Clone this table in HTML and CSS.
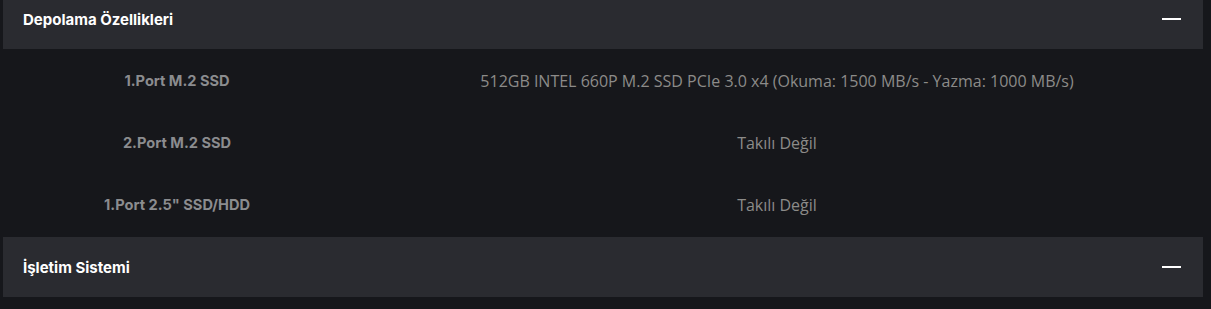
FILE: index.html
```html
<!DOCTYPE html>
<html lang="tr">
<head>
<meta charset="UTF-8" />
<title>Teknik Özellikler</title>
<link rel="stylesheet" href="styles.css">
</head>
<body>
  <div class="specs">
    <div class="spec-group">
      <div class="spec-head">
        <h3>Depolama Özellikleri</h3>
        <span class="toggle"></span>
      </div>
      <table class="spec-table">
        <tr>
          <td class="label">1.Port M.2 SSD</td>
          <td class="value">512GB INTEL 660P M.2 SSD PCIe 3.0 x4 (Okuma: 1500 MB/s - Yazma: 1000 MB/s)</td>
        </tr>
        <tr>
          <td class="label">2.Port M.2 SSD</td>
          <td class="value">Takılı Değil</td>
        </tr>
        <tr>
          <td class="label">1.Port 2.5" SSD/HDD</td>
          <td class="value">Takılı Değil</td>
        </tr>
      </table>
    </div>

    <div class="spec-group">
      <div class="spec-head">
        <h3>İşletim Sistemi</h3>
        <span class="toggle"></span>
      </div>
    </div>
  </div>
</body>
</html>
```

FILE: styles.css
```css
body {
  margin: 0;
  background: #16171b;
  font-family: 'Inter', 'Noto Sans', sans-serif;
  color: #8b8c8f;
}
.specs {
  width: 1200px;
  margin: -11px 0 0 3px;
}
.spec-group {
  margin-bottom: 1px;
}
.spec-head {
  height: 60px;
  background: #2a2b30;
  display: flex;
  align-items: center;
  justify-content: space-between;
  padding: 0 22px 0 20px;
}
.spec-head h3 {
  margin: 0;
  color: #fff;
  font-size: 15px;
  font-weight: 700;
}
.toggle {
  display: block;
  width: 19px;
  height: 2px;
  background: #fff;
}
.spec-table {
  width: 100%;
  border-collapse: collapse;
  margin-top: 1px;
}
.spec-table td {
  height: 62px;
  padding: 0;
  text-align: center;
}
.spec-table .label {
  width: 348px;
  font-weight: 700;
  font-size: 14.6px;
}
.spec-table .value {
  font-family: 'Open Sans', 'Lato', sans-serif;
  font-size: 16px;
  color: #8c8b89;
}
```
